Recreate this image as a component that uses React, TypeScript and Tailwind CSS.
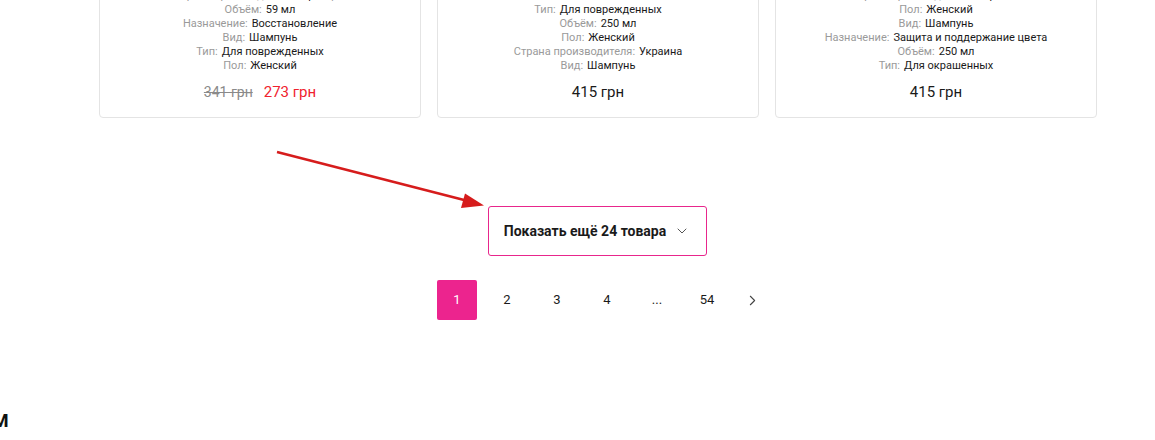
import { ChevronDown, ChevronRight } from "lucide-react";

interface Spec {
    label: string;
    value: string;
}

interface Product {
    id: number;
    specs: Spec[];
    oldPrice?: string;
    price: string;
}

const products: Product[] = [
    {
        id: 1,
        specs: [
            { label: "Страна производителя:", value: "Франция" },
            { label: "Объём:", value: "59 мл" },
            { label: "Назначение:", value: "Восстановление" },
            { label: "Вид:", value: "Шампунь" },
            { label: "Тип:", value: "Для поврежденных" },
            { label: "Пол:", value: "Женский" },
        ],
        oldPrice: "341 грн",
        price: "273 грн",
    },
    {
        id: 2,
        specs: [
            { label: "Назначение:", value: "Восстановление" },
            { label: "Тип:", value: "Для поврежденных" },
            { label: "Объём:", value: "250 мл" },
            { label: "Пол:", value: "Женский" },
            { label: "Страна производителя:", value: "Украина" },
            { label: "Вид:", value: "Шампунь" },
        ],
        price: "415 грн",
    },
    {
        id: 3,
        specs: [
            { label: "Страна производителя:", value: "Украина" },
            { label: "Пол:", value: "Женский" },
            { label: "Вид:", value: "Шампунь" },
            { label: "Назначение:", value: "Защита и поддержание цвета" },
            { label: "Объём:", value: "250 мл" },
            { label: "Тип:", value: "Для окрашенных" },
        ],
        price: "415 грн",
    },
];

const pages = ["1", "2", "3", "4", "...", "54"];

export default function App() {
    return (
        <div className="relative w-[1155px] h-[440px] overflow-hidden bg-white font-['Roboto',sans-serif] text-[#222]">
            {/* Product cards, top part scrolled away */}
            <div className="ml-[99px] w-[998px] -mt-[12px] grid grid-cols-3 gap-[16px]">
                {products.map((p) => (
                    <div key={p.id} className="border border-[#e4e4e4] rounded-[4px] pb-[15px]">
                        <div className="flex flex-col items-center">
                            {p.specs.map((s, i) => (
                                <div key={i} className="flex gap-[4px] text-[11px] leading-[14px]">
                                    <span className="text-[#9a9a9a]">{s.label}</span>
                                    <span className="text-[#1a1a1a]">{s.value}</span>
                                </div>
                            ))}
                        </div>
                        <div className="mt-[9px] h-[20px] flex items-center justify-center gap-[11px]">
                            {p.oldPrice && (
                                <span className="text-[14px] text-[#8a8a8a] line-through">{p.oldPrice}</span>
                            )}
                            <span className={`text-[15px] ${p.oldPrice ? "text-[#f0222e]" : "text-[#1a1a1a]"}`}>
                                {p.price}
                            </span>
                        </div>
                    </div>
                ))}
            </div>

            {/* Load more */}
            <div className="ml-[98px] w-[998px] mt-[88px] flex justify-center">
                <button className="w-[219px] h-[50px] border border-[#e8268c] rounded-[3px] flex items-center justify-center gap-[8px] text-[14px] font-bold text-[#1a1a1a]">
                    Показать ещё 24 товара
                    <ChevronDown className="w-[16px] h-[16px] text-[#555]" strokeWidth={1.5} />
                </button>
            </div>

            {/* Pagination */}
            <div className="ml-[98px] w-[998px] mt-[24px] flex justify-center pl-[10px]">
                <div className="flex items-center gap-[10px]">
                    {pages.map((pg) => (
                        <div
                            key={pg}
                            className={`w-[40px] h-[40px] rounded-[2px] flex items-center justify-center text-[13px] ${
                                pg === "1" ? "bg-[#ec248e] text-white" : "text-[#1a1a1a]"
                            }`}
                        >
                            {pg}
                        </div>
                    ))}
                    <div className="w-[30px] h-[40px] flex items-center justify-center">
                        <ChevronRight className="w-[17px] h-[17px] text-[#444]" strokeWidth={1.5} />
                    </div>
                </div>
            </div>

            {/* Next section heading, cut at the left */}
            <div className="mt-[89px] -ml-[8px] text-[19px] leading-[24px] font-bold text-[#111]">М</div>

            {/* Annotation arrow */}
            <svg className="absolute left-0 top-0 pointer-events-none" width="1155" height="440">
                <line x1="277" y1="152" x2="468" y2="201" stroke="#d61c1c" strokeWidth="2.6" />
                <polygon points="484,205.5 465,193.5 461,208" fill="#d61c1c" />
            </svg>
        </div>
    );
}
